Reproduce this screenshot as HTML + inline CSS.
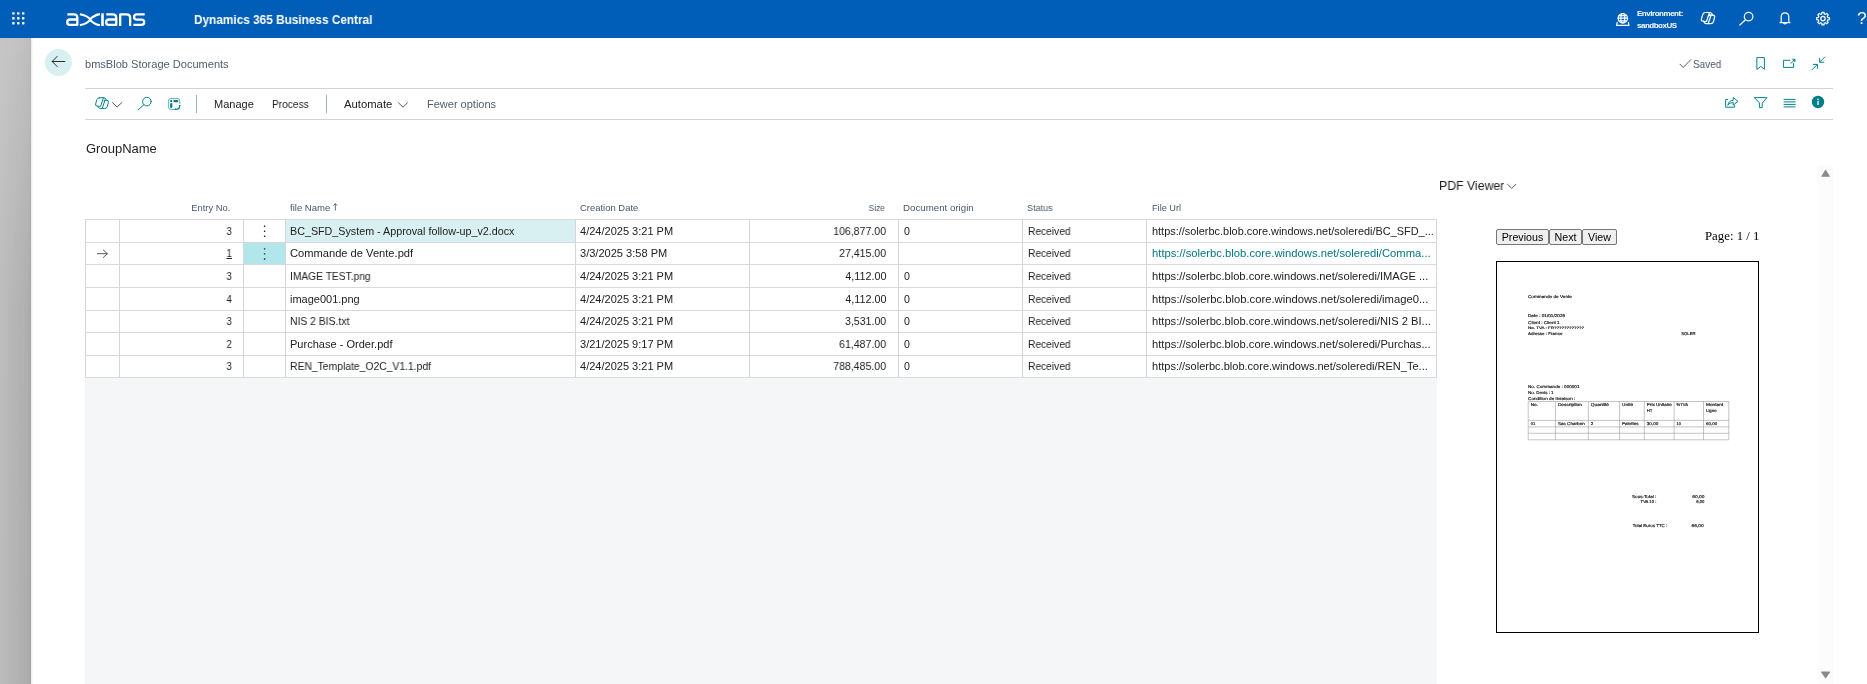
<!DOCTYPE html>
<html>
<head>
<meta charset="utf-8">
<title>bmsBlob Storage Documents</title>
<style>
*{box-sizing:border-box;margin:0;padding:0}
html,body{width:1867px;height:684px;overflow:hidden;background:#fff;font-family:"Liberation Sans",sans-serif;color:#212121}
.abs{position:absolute}
.t,.c,.ch,.pb{will-change:transform}
.t{position:absolute;white-space:pre;line-height:1}
#hdr{position:absolute;left:0;top:0;width:1867px;height:38px;background:#005eb8}
#strip{position:absolute;left:0;top:38px;width:31px;height:646px;background:linear-gradient(90deg,rgba(0,0,0,0) 0,rgba(0,0,0,.03) 92%,rgba(0,0,0,.07) 100%),linear-gradient(180deg,#c6c6c6 0,#bebebe 260px,#bcbcbc 100%)}
#strip2{position:absolute;left:0;top:38px;width:31px;height:646px;background:linear-gradient(90deg,rgba(0,0,0,0) 0,rgba(0,0,0,.06) 100%);-webkit-mask-image:linear-gradient(180deg,rgba(0,0,0,0) 0,#000 280px);mask-image:linear-gradient(180deg,rgba(0,0,0,0) 0,#000 280px)}
#stripsh{position:absolute;left:31px;top:38px;width:2px;height:646px;background:linear-gradient(90deg,#e8e8e8,#fdfdfd)}
#gray{position:absolute;left:85px;top:378px;width:1352px;height:306px;background:#f5f6f8}
svg{position:absolute;overflow:visible}
.ic{fill:none;stroke:#00838c;stroke-width:1;stroke-linecap:round;stroke-linejoin:round}
.wic{fill:none;stroke:#fff;stroke-width:1.2;stroke-linecap:round;stroke-linejoin:round}
.hl{position:absolute;height:1px;background:#cfd3da}
.gl{background:#d7d9dc}
.vl{position:absolute;width:1px;background:#d3d6dc}
.ch{position:absolute;white-space:pre;line-height:1;font-size:9.4px;color:#4a566a;top:203px}
.c{position:absolute;white-space:pre;line-height:1;font-size:11px;color:#212121}
</style>
</head>
<body>
<!-- ===== top header ===== -->
<div id="hdr"></div>
<div id="strip"></div><div id="strip2"></div><div id="stripsh"></div>

<!-- waffle -->
<svg style="left:12px;top:12px" width="14" height="14" viewBox="0 0 14 14"><g fill="#fff">
<rect x="0.2" y="0.2" width="2.4" height="2.4" rx="0.6"/><rect x="5.1" y="0.2" width="2.4" height="2.4" rx="0.6"/><rect x="10" y="0.2" width="2.4" height="2.4" rx="0.6"/>
<rect x="0.2" y="5.1" width="2.4" height="2.4" rx="0.6"/><rect x="5.1" y="5.1" width="2.4" height="2.4" rx="0.6"/><rect x="10" y="5.1" width="2.4" height="2.4" rx="0.6"/>
<rect x="0.2" y="10" width="2.4" height="2.4" rx="0.6"/><rect x="5.1" y="10" width="2.4" height="2.4" rx="0.6"/><rect x="10" y="10" width="2.4" height="2.4" rx="0.6"/>
</g></svg>

<svg style="left:0;top:0" width="200" height="38" viewBox="0 0 200 38"><g fill="none" stroke="#fff" stroke-width="2.3" stroke-linejoin="round">
<path id="la" d="M67.4 14.45 H73.9 Q77.35 14.45 77.35 17.9 V24.85 H70 Q67.25 24.85 67.25 22.15 Q67.25 19.5 70 19.5 H77.3"/>
<use href="#la" x="38.9"/>
<path d="M79.9 14.3 C85.5 15.2 89.2 18 90.6 19.65 C89.2 21.4 85.5 24.3 79.9 25.1" stroke-width="2.1"/>
<path d="M99.9 14.1 C94.6 15.1 91.2 18 89.9 19.65 C91.2 21.4 94.6 24.3 99.9 25.2" stroke-width="2.1"/>
<path d="M102.5 13.3 V26" stroke-width="2.6"/>
<path d="M120.2 26 V14.45 H126.7 Q130.15 14.45 130.15 17.9 V26"/>
<path d="M144.7 14.45 H136.8 Q134.1 14.45 134.1 17.05 Q134.1 19.7 136.8 19.7 H141.5 Q144.2 19.7 144.2 22.3 Q144.2 24.9 141.5 24.9 H133.4"/>
</g></svg>
<div class="t" id="apptitle" style="left:194.4px;top:12.6px;font-size:13.2px;font-weight:700;color:#fff;transform-origin:0 0;transform:scaleX(.895)">Dynamics 365 Business Central</div>
<!-- globe -->
<svg style="left:0;top:0" width="1867" height="38" viewBox="0 0 1867 38">
<g class="wic" stroke-width="1">
<circle cx="1622.8" cy="18.2" r="4.7"/><ellipse cx="1622.8" cy="18.2" rx="2" ry="4.7"/><path d="M1618.2 18.2 H1627.4 M1619 15.6 H1626.6 M1619 20.8 H1626.6"/>
<path d="M1617.2 22.4 L1616.6 25.4 H1629 L1628.4 22.4" />
</g>
<!-- copilot -->
<g class="wic" stroke-width="1.05" transform="translate(1701.2 12.4) scale(1.03) translate(-95.4 -97.6)">
<path d="M99.6 97.7 H103.7 Q105.3 97.7 105.9 99.2 L106.3 100.3 H106.9 Q108.8 100.4 108.4 102.4 L107.3 106.5 Q106.7 108.6 104.6 108.6 H100.5 Q98.9 108.6 98.3 107.1 L97.9 106.1 H97.2 Q95.1 106 95.6 103.9 L96.9 99.7 Q97.5 97.7 99.6 97.7 Z"/>
<path d="M103.4 97.9 L100.6 106.2 Q100.2 106.9 98.2 106.2 M105 100.2 L102.2 108.4 M106.2 100.3 Q104 99.6 103.6 100.6"/>
</g>
<!-- search -->
<g class="wic" stroke-width="1.25"><circle cx="1748.6" cy="16.6" r="4.3"/><path d="M1745.5 19.8 L1739.8 25"/></g>
<!-- bell -->
<g class="wic" stroke-width="1.25"><path d="M1780 22.6 H1790 M1781.2 22.4 V17 Q1781.2 12.8 1785 12.8 Q1788.8 12.8 1788.8 17 V22.4"/><path d="M1783.6 23.2 Q1785 24.6 1786.4 23.2" stroke-width="1.1"/></g>
<!-- gear -->
<g class="wic" stroke-width="1.2"><circle cx="1823" cy="18.6" r="2.2"/>
<path d="M1821.82 13.84 L1821.95 12.29 L1824.05 12.29 L1824.18 13.84 L1825.53 14.40 L1826.72 13.39 L1828.21 14.88 L1827.20 16.07 L1827.76 17.42 L1829.31 17.55 L1829.31 19.65 L1827.76 19.78 L1827.20 21.13 L1828.21 22.32 L1826.72 23.81 L1825.53 22.80 L1824.18 23.36 L1824.05 24.91 L1821.95 24.91 L1821.82 23.36 L1820.47 22.80 L1819.28 23.81 L1817.79 22.32 L1818.80 21.13 L1818.24 19.78 L1816.69 19.65 L1816.69 17.55 L1818.24 17.42 L1818.80 16.07 L1817.79 14.88 L1819.28 13.39 L1820.47 14.40 Z"/></g>
</svg>
<div class="t" style="left:1637px;top:9.6px;font-size:8px;font-weight:700;color:#fff;letter-spacing:-.47px" id="env1">Environment:</div>
<div class="t" style="left:1637px;top:21.6px;font-size:8px;font-weight:700;color:#fff;letter-spacing:-.5px" id="env2">sandboxUS</div>
<div class="t" style="left:1856.6px;top:9.6px;font-size:17.4px;color:#fff" id="qm">?</div>
<div class="abs" style="left:45px;top:49px;width:27px;height:27px;border-radius:50%;background:#d9f0f2"></div>
<svg style="left:0;top:38px" width="1867" height="90" viewBox="0 38 1867 90">
<path d="M64.8 61.5 H52.4 M57.2 56.4 L52.2 61.5 L57.2 66.6" fill="none" stroke="#212121" stroke-width=".95" stroke-linecap="round" stroke-linejoin="round"/>
<!-- saved check -->
<path d="M1680 64.2 L1683.2 67.5 L1690.8 59.6" fill="none" stroke="#505c6d" stroke-width="1" stroke-linecap="round" stroke-linejoin="round"/>
<!-- bookmark -->
<path class="ic" d="M1757.2 57.6 H1764.4 V69.3 L1760.8 66.4 L1757.2 69.3 Z"/>
<!-- open in new -->
<path class="ic" d="M1789.8 60.3 H1783.4 V67.4 H1793.6 V63.4 M1793 59.3 H1795 V61.3 Z M1794.6 59.7 L1790.8 63.4"/>
<!-- collapse -->
<path class="ic" d="M1824.8 57 L1819.8 62 M1819.6 58.2 V62.2 H1823.6 M1812.2 69.6 L1817.2 64.6 M1813.4 64.4 H1817.4 V68.4"/>
</svg>
<div class="t" id="ptitle" style="left:85.4px;top:59.4px;font-size:11px;color:#505c6d;transform-origin:0 0;transform:scaleX(1.004)">bmsBlob Storage Documents</div>
<div class="t" id="saved" style="left:1693px;top:58.7px;font-size:10.6px;color:#48546a;transform-origin:0 0;transform:scaleX(.94)">Saved</div>
<div class="hl" style="left:85px;top:88px;width:1748px"></div>
<div class="hl" style="left:85px;top:119px;width:1748px"></div>
<div class="vl" style="left:196px;top:95px;height:18px;background:#a5acb9"></div>
<div class="vl" style="left:326px;top:95px;height:18px;background:#a5acb9"></div>
<svg style="left:0;top:88px" width="1867" height="32" viewBox="0 88 1867 32">
<!-- copilot small -->
<g class="ic" stroke-width=".95">
<path d="M99.6 97.7 H103.7 Q105.3 97.7 105.9 99.2 L106.3 100.3 H106.9 Q108.8 100.4 108.4 102.4 L107.3 106.5 Q106.7 108.6 104.6 108.6 H100.5 Q98.9 108.6 98.3 107.1 L97.9 106.1 H97.2 Q95.1 106 95.6 103.9 L96.9 99.7 Q97.5 97.7 99.6 97.7 Z"/>
<path d="M103.4 97.9 L100.6 106.2 Q100.2 106.9 98.2 106.2 M105 100.2 L102.2 108.4 M106.2 100.3 Q104 99.6 103.6 100.6"/>
</g>
<path d="M112.4 102.6 L117.1 107 L121.8 102.6" fill="none" stroke="#505c6d" stroke-width="1" stroke-linecap="round" stroke-linejoin="round"/>
<!-- search -->
<g class="ic" stroke-width="1.15"><circle cx="146.9" cy="101.6" r="4.3"/><path d="M143.8 104.8 L138.2 109.8"/></g>
<!-- page/personalize icon -->
<path d="M174.6 109.5 H171.2 Q168.4 109.5 168.4 106.7 V101.2 Q168.4 98.4 171.2 98.4 H177 Q179.8 98.4 179.8 101.2 V103.6" fill="none" stroke="#00838c" stroke-opacity=".7" stroke-width=".9" stroke-linecap="round"/>
<g fill="#007b84"><rect x="170.2" y="100.1" width="2" height="2" rx=".6"/><rect x="173.3" y="100" width="5" height="2.3" rx="1.1"/><rect x="170.1" y="103" width="2.2" height="5.2" rx="1.1"/>
<path d="M178.6 105 L180.7 105 L179.9 107.2 Z M175 108.2 L177.2 109 L175.2 110.5 Z"/></g>
<path d="M179.7 106.4 Q179.4 109.2 176.4 109.5" fill="none" stroke="#007b84" stroke-width="1.1"/>
<!-- automate chevron -->
<path d="M398.5 102.8 L403 107.2 L407.5 102.8" fill="none" stroke="#505c6d" stroke-width="1" stroke-linecap="round" stroke-linejoin="round"/>
<!-- share -->
<g class="ic" stroke-width="1.05"><path d="M1727.6 99.6 H1725.6 V107.2 H1734.6 V105.6"/><path d="M1728 104.8 Q1728.6 100.6 1733.2 100.4 V97.4 L1738 101.4 L1733.2 105.2 V102.6 Q1729.8 102.4 1728 104.8 Z"/></g>
<!-- filter -->
<path class="ic" d="M1754.7 97.6 H1766.9 L1762.2 103.2 V107.6 H1759.4 V103.2 Z"/>
<!-- list -->
<path class="ic" d="M1784 99.4 H1795.2 M1784 101.9 H1795.2 M1784 104.4 H1795.2 M1784 106.9 H1795.2" stroke-width=".8" stroke-linecap="butt"/>
<!-- info -->
<circle cx="1818" cy="102" r="6.2" fill="#007e87"/>
<rect x="1817.4" y="100.8" width="1.3" height="4.2" fill="#fff"/><rect x="1817.4" y="98.7" width="1.3" height="1.3" fill="#fff"/>
</svg>
<div class="t" id="tb1" style="left:213.8px;top:98.8px;font-size:11px;color:#212121;transform-origin:0 0;transform:scaleX(1.0)">Manage</div>
<div class="t" id="tb2" style="left:272.2px;top:98.8px;font-size:11px;color:#212121;transform-origin:0 0;transform:scaleX(.925)">Process</div>
<div class="t" id="tb3" style="left:344.4px;top:98.8px;font-size:11px;color:#212121;transform-origin:0 0;transform:scaleX(1.026)">Automate</div>
<div class="t" id="tb4" style="left:427.3px;top:98.8px;font-size:11px;color:#505c6d;transform-origin:0 0;transform:scaleX(1.0)">Fewer options</div>
<!-- GRIDSTART -->
<div id="gray"></div>
<div class="t" id="grp" style="left:85.6px;top:141.6px;font-size:13px;color:#212121;transform-origin:0 0;transform:scaleX(1.0)">GroupName</div>
<div class="abs" style="left:286px;top:220px;width:289px;height:22px;background:#d9f0f2"></div>
<div class="abs" style="left:244px;top:243px;width:41px;height:21px;background:#b1e6ea"></div>
<div class="hl gl" style="left:85px;top:219px;width:1352px"></div>
<div class="hl gl" style="left:85px;top:242px;width:1352px"></div>
<div class="hl gl" style="left:85px;top:264px;width:1352px"></div>
<div class="hl gl" style="left:85px;top:287px;width:1352px"></div>
<div class="hl gl" style="left:85px;top:310px;width:1352px"></div>
<div class="hl gl" style="left:85px;top:332px;width:1352px"></div>
<div class="hl gl" style="left:85px;top:355px;width:1352px"></div>
<div class="hl gl" style="left:85px;top:377px;width:1352px"></div>
<div class="vl" style="left:85px;top:219px;height:159px"></div>
<div class="vl" style="left:119px;top:219px;height:159px"></div>
<div class="vl" style="left:243px;top:219px;height:159px"></div>
<div class="vl" style="left:285px;top:219px;height:159px"></div>
<div class="vl" style="left:575px;top:219px;height:159px"></div>
<div class="vl" style="left:749px;top:219px;height:159px"></div>
<div class="vl" style="left:898px;top:219px;height:159px"></div>
<div class="vl" style="left:1022px;top:219px;height:159px"></div>
<div class="vl" style="left:1146px;top:219px;height:159px"></div>
<div class="vl" style="left:1436px;top:219px;height:159px"></div>
<div class="ch" id="h1" style="right:1636.3px;top:204.0px;font-size:9.2px;transform-origin:100% 0;transform:scaleX(1.0184)">Entry No.</div>
<div class="ch" id="h2" style="left:289.8px;top:204.0px;font-size:9.2px;transform-origin:0 0;transform:scaleX(1.0383)">file Name</div>
<div class="ch" id="h3" style="left:579.7px;top:204.0px;font-size:9.2px;transform-origin:0 0;transform:scaleX(1.0284)">Creation Date</div>
<div class="ch" id="h4" style="right:981.9px;top:204.0px;font-size:9.2px;transform-origin:100% 0;transform:scaleX(0.9119)">Size</div>
<div class="ch" id="h5" style="left:903.3px;top:204.0px;font-size:9.2px;transform-origin:0 0;transform:scaleX(1.0567)">Document origin</div>
<div class="ch" id="h6" style="left:1027.3px;top:204.0px;font-size:9.2px;transform-origin:0 0;transform:scaleX(0.979)">Status</div>
<div class="ch" id="h7" style="left:1151.5px;top:204.0px;font-size:9.2px;transform-origin:0 0;transform:scaleX(0.9968)">File Url</div>
<div class="c" id="r0a" style="right:1635.5px;top:226.45px;font-size:10.6px;transform-origin:100% 0;transform:scaleX(0.9143)">3</div>
<div class="c" id="r0b" style="left:290.1px;top:226.45px;font-size:10.6px;transform-origin:0 0;transform:scaleX(1.0136)">BC_SFD_System - Approval follow-up_v2.docx</div>
<div class="c" id="r0c" style="left:580.0px;top:226.45px;font-size:10.6px;transform-origin:0 0;transform:scaleX(1.0399)">4/24/2025 3:21 PM</div>
<div class="c" id="r0d" style="right:980.7px;top:226.45px;font-size:10.6px;transform-origin:100% 0;transform:scaleX(0.9956)">106,877.00</div>
<div class="c" id="r0e" style="left:903.5px;top:226.45px;font-size:10.6px;transform-origin:0 0;transform:scaleX(0.9481)">0</div>
<div class="c" id="r0f" style="left:1028.4px;top:226.45px;font-size:10.6px;transform-origin:0 0;transform:scaleX(0.9644)">Received</div>
<div class="c" id="r0g" style="left:1152.3px;top:226.45px;font-size:10.6px;transform-origin:0 0;transform:scaleX(1.0314)">https://solerbc.blob.core.windows.net/soleredi/BC_SFD_...</div>
<div class="c" id="r1a" style="right:1635.5px;top:247.95px;font-size:10.6px;text-decoration:underline;text-underline-offset:.6px;text-decoration-thickness:1px;transform-origin:100% 0;transform:scaleX(0.9143)">1</div>
<div class="c" id="r1b" style="left:290.1px;top:247.95px;font-size:10.6px;transform-origin:0 0;transform:scaleX(1.0503)">Commande de Vente.pdf</div>
<div class="c" id="r1c" style="left:580.0px;top:247.95px;font-size:10.6px;transform-origin:0 0;transform:scaleX(1.0426)">3/3/2025 3:58 PM</div>
<div class="c" id="r1d" style="right:980.7px;top:247.95px;font-size:10.6px;transform-origin:100% 0;transform:scaleX(0.997)">27,415.00</div>
<div class="c" id="r1f" style="left:1028.4px;top:247.95px;font-size:10.6px;transform-origin:0 0;transform:scaleX(0.9644)">Received</div>
<div class="c" id="r1g" style="left:1152.3px;top:247.95px;font-size:10.6px;color:#00777f;transform-origin:0 0;transform:scaleX(1.0613)">https://solerbc.blob.core.windows.net/soleredi/Comma...</div>
<div class="c" id="r2a" style="right:1635.5px;top:271.45px;font-size:10.6px;transform-origin:100% 0;transform:scaleX(0.9143)">3</div>
<div class="c" id="r2b" style="left:290.1px;top:271.45px;font-size:10.6px;transform-origin:0 0;transform:scaleX(0.9662)">IMAGE TEST.png</div>
<div class="c" id="r2c" style="left:580.0px;top:271.45px;font-size:10.6px;transform-origin:0 0;transform:scaleX(1.0399)">4/24/2025 3:21 PM</div>
<div class="c" id="r2d" style="right:980.7px;top:271.45px;font-size:10.6px;transform-origin:100% 0;transform:scaleX(1.0185)">4,112.00</div>
<div class="c" id="r2e" style="left:903.5px;top:271.45px;font-size:10.6px;transform-origin:0 0;transform:scaleX(0.9481)">0</div>
<div class="c" id="r2f" style="left:1028.4px;top:271.45px;font-size:10.6px;transform-origin:0 0;transform:scaleX(0.9644)">Received</div>
<div class="c" id="r2g" style="left:1152.3px;top:271.45px;font-size:10.6px;transform-origin:0 0;transform:scaleX(1.0521)">https://solerbc.blob.core.windows.net/soleredi/IMAGE ...</div>
<div class="c" id="r3a" style="right:1635.5px;top:294.45px;font-size:10.6px;transform-origin:100% 0;transform:scaleX(0.9143)">4</div>
<div class="c" id="r3b" style="left:290.1px;top:294.45px;font-size:10.6px;transform-origin:0 0;transform:scaleX(1.0379)">image001.png</div>
<div class="c" id="r3c" style="left:580.0px;top:294.45px;font-size:10.6px;transform-origin:0 0;transform:scaleX(1.0399)">4/24/2025 3:21 PM</div>
<div class="c" id="r3d" style="right:980.7px;top:294.45px;font-size:10.6px;transform-origin:100% 0;transform:scaleX(1.0185)">4,112.00</div>
<div class="c" id="r3e" style="left:903.5px;top:294.45px;font-size:10.6px;transform-origin:0 0;transform:scaleX(0.9481)">0</div>
<div class="c" id="r3f" style="left:1028.4px;top:294.45px;font-size:10.6px;transform-origin:0 0;transform:scaleX(0.9644)">Received</div>
<div class="c" id="r3g" style="left:1152.3px;top:294.45px;font-size:10.6px;transform-origin:0 0;transform:scaleX(1.0615)">https://solerbc.blob.core.windows.net/soleredi/image0...</div>
<div class="c" id="r4a" style="right:1635.5px;top:315.95px;font-size:10.6px;transform-origin:100% 0;transform:scaleX(0.9143)">3</div>
<div class="c" id="r4b" style="left:290.1px;top:315.95px;font-size:10.6px;transform-origin:0 0;transform:scaleX(0.9779)">NIS 2 BIS.txt</div>
<div class="c" id="r4c" style="left:580.0px;top:315.95px;font-size:10.6px;transform-origin:0 0;transform:scaleX(1.0399)">4/24/2025 3:21 PM</div>
<div class="c" id="r4d" style="right:980.7px;top:315.95px;font-size:10.6px;transform-origin:100% 0;transform:scaleX(0.9988)">3,531.00</div>
<div class="c" id="r4e" style="left:903.5px;top:315.95px;font-size:10.6px;transform-origin:0 0;transform:scaleX(0.9481)">0</div>
<div class="c" id="r4f" style="left:1028.4px;top:315.95px;font-size:10.6px;transform-origin:0 0;transform:scaleX(0.9644)">Received</div>
<div class="c" id="r4g" style="left:1152.3px;top:315.95px;font-size:10.6px;transform-origin:0 0;transform:scaleX(1.0525)">https://solerbc.blob.core.windows.net/soleredi/NIS 2 BI...</div>
<div class="c" id="r5a" style="right:1635.5px;top:339.45px;font-size:10.6px;transform-origin:100% 0;transform:scaleX(0.9143)">2</div>
<div class="c" id="r5b" style="left:290.1px;top:339.45px;font-size:10.6px;transform-origin:0 0;transform:scaleX(1.0423)">Purchase - Order.pdf</div>
<div class="c" id="r5c" style="left:580.0px;top:339.45px;font-size:10.6px;transform-origin:0 0;transform:scaleX(1.0399)">3/21/2025 9:17 PM</div>
<div class="c" id="r5d" style="right:980.7px;top:339.45px;font-size:10.6px;transform-origin:100% 0;transform:scaleX(0.997)">61,487.00</div>
<div class="c" id="r5e" style="left:903.5px;top:339.45px;font-size:10.6px;transform-origin:0 0;transform:scaleX(0.9481)">0</div>
<div class="c" id="r5f" style="left:1028.4px;top:339.45px;font-size:10.6px;transform-origin:0 0;transform:scaleX(0.9644)">Received</div>
<div class="c" id="r5g" style="left:1152.3px;top:339.45px;font-size:10.6px;transform-origin:0 0;transform:scaleX(1.0541)">https://solerbc.blob.core.windows.net/soleredi/Purchas...</div>
<div class="c" id="r6a" style="right:1635.5px;top:361.45px;font-size:10.6px;transform-origin:100% 0;transform:scaleX(0.9143)">3</div>
<div class="c" id="r6b" style="left:290.1px;top:361.45px;font-size:10.6px;transform-origin:0 0;transform:scaleX(0.9773)">REN_Template_O2C_V1.1.pdf</div>
<div class="c" id="r6c" style="left:580.0px;top:361.45px;font-size:10.6px;transform-origin:0 0;transform:scaleX(1.0399)">4/24/2025 3:21 PM</div>
<div class="c" id="r6d" style="right:980.7px;top:361.45px;font-size:10.6px;transform-origin:100% 0;transform:scaleX(0.9956)">788,485.00</div>
<div class="c" id="r6e" style="left:903.5px;top:361.45px;font-size:10.6px;transform-origin:0 0;transform:scaleX(0.9481)">0</div>
<div class="c" id="r6f" style="left:1028.4px;top:361.45px;font-size:10.6px;transform-origin:0 0;transform:scaleX(0.9644)">Received</div>
<div class="c" id="r6g" style="left:1152.3px;top:361.45px;font-size:10.6px;transform-origin:0 0;transform:scaleX(1.0408)">https://solerbc.blob.core.windows.net/soleredi/REN_Te...</div>
<svg style="left:0;top:195px" width="400" height="30" viewBox="0 195 400 30"><path d="M335.3 210.6 V203.7 M333.5 205.6 L335.3 203.6 L337.1 205.6" fill="none" stroke="#505c6d" stroke-width=".9"/></svg>
<svg style="left:0;top:215px" width="300" height="60" viewBox="0 215 300 60"><g fill="#212121"><rect x="263.9" y="225.50" width="1.4" height="1.4" rx=".3"/><rect x="263.9" y="230.50" width="1.4" height="1.4" rx=".3"/><rect x="263.9" y="235.60" width="1.4" height="1.4" rx=".3"/><rect x="263.9" y="248.20" width="1.4" height="1.4" rx=".3"/><rect x="263.9" y="253.20" width="1.4" height="1.4" rx=".3"/><rect x="263.9" y="258.30" width="1.4" height="1.4" rx=".3"/></g><path d="M97.4 253.7 H107.2 M103.4 250 L107.3 253.7 L103.4 257.4" fill="none" stroke="#444" stroke-width=".9" stroke-linecap="round" stroke-linejoin="round"/></svg>
<!-- GRIDEND -->
<!-- PDFSTART -->
<div class="abs" style="left:1818px;top:165px;width:15px;height:519px;background:#fcfcfc"></div>
<svg style="left:0;top:0" width="1867" height="684" viewBox="0 0 1867 684"><g fill="#8a8a8a" stroke="#8a8a8a" stroke-width="1.2" stroke-linejoin="round"><path d="M1822 176.2 L1825.6 170.6 L1829.2 176.2 Z"/><path d="M1821.6 672 L1825.6 677.6 L1829.6 672 Z"/></g><path d="M1507.6 184.4 L1511.7 188.4 L1515.8 184.4" fill="none" stroke="#505c6d" stroke-width="1" stroke-linecap="round" stroke-linejoin="round"/></svg>
<div class="t" id="pdfv" style="left:1438.6px;top:179.8px;font-size:12.6px;color:#212121;transform-origin:0 0;transform:scaleX(.975)">PDF Viewer</div>
<style>.pb{background:#efefef;border:1px solid #767676;border-radius:2px;font-size:10.67px;line-height:15px;text-align:center;color:#000;white-space:pre}</style>
<div class="abs pb" id="b1" style="left:1496px;top:229px;width:53px;height:16px">Previous</div>
<div class="abs pb" id="b2" style="left:1549px;top:229px;width:33px;height:16px">Next</div>
<div class="abs pb" id="b3" style="left:1582px;top:229px;width:35px;height:16px">View</div>
<div class="t" id="pg" style="left:1705px;top:229.8px;font-family:'Liberation Serif',serif;font-size:12.8px;color:#000;transform-origin:0 0;transform:scaleX(1)">Page: 1 / 1</div>
<div class="abs" style="left:1496px;top:261px;width:263px;height:372px;border:1px solid #000;background:#fff"></div>
<svg style="left:0;top:0" width="1867" height="684" viewBox="0 0 1867 684"><g transform="scale(.1)" font-family="Liberation Sans" fill="#111" stroke="#111" stroke-width="1.6" text-rendering="geometricPrecision"><text x="15280" y="2978.0" font-size="42.0" font-weight="400" text-anchor="start" textLength="439.0" lengthAdjust="spacingAndGlyphs">Commande de Vente</text><text x="15280" y="3168.0" font-size="42.0" font-weight="400" text-anchor="start" textLength="371.0" lengthAdjust="spacingAndGlyphs">Date : 01/01/2025</text><text x="15280" y="3235.0" font-size="42.0" font-weight="400" text-anchor="start" textLength="317.0" lengthAdjust="spacingAndGlyphs">Client : Client 1</text><text x="15280" y="3289.0" font-size="36.0" font-weight="400" text-anchor="start" textLength="560" lengthAdjust="spacingAndGlyphs">No. TVA : FR????????????</text><text x="15280" y="3354.0" font-size="42.0" font-weight="400" text-anchor="start" textLength="344.0" lengthAdjust="spacingAndGlyphs">Adresse : France</text><text x="16812.0" y="3354.0" font-size="42.0" font-weight="400" text-anchor="start" textLength="144.0" lengthAdjust="spacingAndGlyphs">SOLER</text><text x="15280" y="3881.0" font-size="42.0" font-weight="400" text-anchor="start" textLength="515.0" lengthAdjust="spacingAndGlyphs">No. Commande : 000001</text><text x="15280" y="3937.0" font-size="42.0" font-weight="400" text-anchor="start" textLength="256.0" lengthAdjust="spacingAndGlyphs">No. Devis : 1</text><text x="15280" y="3999.0" font-size="42.0" font-weight="400" text-anchor="start" textLength="474.0" lengthAdjust="spacingAndGlyphs">Condition de livraison :</text><text x="15307.0" y="4060" font-size="41.0" font-weight="400" text-anchor="start" textLength="73.0" lengthAdjust="spacingAndGlyphs">No.</text><text x="15579.0" y="4060" font-size="41.0" font-weight="400" text-anchor="start" textLength="240" lengthAdjust="spacingAndGlyphs">Description</text><text x="15908.0" y="4060" font-size="41.0" font-weight="400" text-anchor="start" textLength="182.0" lengthAdjust="spacingAndGlyphs">Quantité</text><text x="16221.0" y="4060" font-size="41.0" font-weight="400" text-anchor="start" textLength="110" lengthAdjust="spacingAndGlyphs">Unité</text><text x="16468.0" y="4060" font-size="41.0" font-weight="400" text-anchor="start" textLength="250" lengthAdjust="spacingAndGlyphs">Prix Unitaire</text><text x="16766.0" y="4060" font-size="41.0" font-weight="400" text-anchor="start" textLength="114.0" lengthAdjust="spacingAndGlyphs">%TVA</text><text x="17060.0" y="4060" font-size="41.0" font-weight="400" text-anchor="start" textLength="171.0" lengthAdjust="spacingAndGlyphs">Montant</text><text x="16468.0" y="4122.0" font-size="41.0" font-weight="400" text-anchor="start" textLength="56.0" lengthAdjust="spacingAndGlyphs">HT</text><text x="17060.0" y="4122.0" font-size="41.0" font-weight="400" text-anchor="start" textLength="106.0" lengthAdjust="spacingAndGlyphs">Ligne</text><text x="15307.0" y="4252.0" font-size="41.0" font-weight="400" text-anchor="start" textLength="45.0" lengthAdjust="spacingAndGlyphs">01</text><text x="15579.0" y="4252.0" font-size="41.0" font-weight="400" text-anchor="start" textLength="269.0" lengthAdjust="spacingAndGlyphs">Sac Charbon</text><text x="15908.0" y="4252.0" font-size="41.0" font-weight="400" text-anchor="start" textLength="25.0" lengthAdjust="spacingAndGlyphs">2</text><text x="16221.0" y="4252.0" font-size="41.0" font-weight="400" text-anchor="start" textLength="163.0" lengthAdjust="spacingAndGlyphs">Palettes</text><text x="16468.0" y="4252.0" font-size="41.0" font-weight="400" text-anchor="start" textLength="114.0" lengthAdjust="spacingAndGlyphs">30,00</text><text x="16766.0" y="4252.0" font-size="41.0" font-weight="400" text-anchor="start" textLength="44.0" lengthAdjust="spacingAndGlyphs">10</text><text x="17060.0" y="4252.0" font-size="41.0" font-weight="400" text-anchor="start" textLength="112.0" lengthAdjust="spacingAndGlyphs">60,00</text><text x="16563.0" y="4976.0" font-size="42.0" font-weight="400" text-anchor="end" textLength="243.0" lengthAdjust="spacingAndGlyphs">Sous-Total :</text><text x="17044.0" y="4976.0" font-size="42.0" font-weight="400" text-anchor="end" textLength="121.0" lengthAdjust="spacingAndGlyphs">60,00</text><text x="16563.0" y="5033.0" font-size="42.0" font-weight="400" text-anchor="end" textLength="157.0" lengthAdjust="spacingAndGlyphs">TVA 10 :</text><text x="17044.0" y="5033.0" font-size="42.0" font-weight="400" text-anchor="end" textLength="82.0" lengthAdjust="spacingAndGlyphs">6,00</text><text x="16673.0" y="5272.0" font-size="42.0" font-weight="400" text-anchor="end" textLength="346.0" lengthAdjust="spacingAndGlyphs">Total Euros TTC :</text><text x="17037.0" y="5272.0" font-size="42.0" font-weight="400" text-anchor="end" textLength="121.0" lengthAdjust="spacingAndGlyphs">66,00</text></g><path d="M1528.2 401.5 H1728.8 M1528.2 420.4 H1728.8 M1528.2 426.9 H1728.8 M1528.2 433.3 H1728.8 M1528.2 439.8 H1728.8 M1528.2 401.5 V439.8 M1555.4 401.5 V439.8 M1588.3 401.5 V439.8 M1619.6 401.5 V439.8 M1644.3 401.5 V439.8 M1674.1 401.5 V439.8 M1703.5 401.5 V439.8 M1728.8 401.5 V439.8" fill="none" stroke="#888" stroke-width=".5"/></svg>
<!-- PDFEND -->
</body>
</html>
